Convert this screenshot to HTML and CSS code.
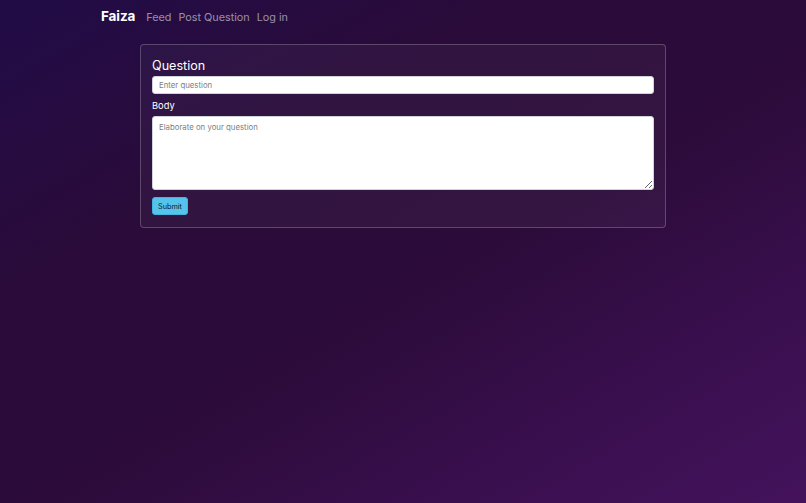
FILE: index.html
```html
<!DOCTYPE html>
<html lang="en">
<head>
<meta charset="utf-8">
<title>Post Question</title>
<link rel="stylesheet" href="styles.css">
</head>
<body>
<nav class="navbar">
  <a class="brand" href="#">Faiza</a>
  <ul class="nav-links">
    <li><a href="#">Feed</a></li>
    <li><a href="#">Post Question</a></li>
    <li><a href="#">Log in</a></li>
  </ul>
</nav>
<main class="main">
  <form class="card">
    <label class="title" for="q">Question</label>
    <input class="input" id="q" type="text" placeholder="Enter question">
    <label class="label" for="b">Body</label>
    <textarea class="textarea" id="b" placeholder="Elaborate on your question"></textarea>
    <div class="actions"><button class="btn" type="button">Submit</button></div>
  </form>
</main>
</body>
</html>
```
FILE: styles.css
```css
html, body {
  margin: 0;
  height: 100%;
}
body {
  font-family: Inter, "Liberation Sans", Arial, sans-serif;
  color: #fff;
  background: linear-gradient(150deg, #210c47 0%, #2a0b3a 30%, #2c0b3a 55%, #3a0f4f 80%, #43125b 100%);
  min-height: 503px;
}
.navbar {
  display: flex;
  align-items: baseline;
  height: 32px;
  box-sizing: border-box;
  padding: 5px 0 0 101px;
}
.brand {
  font-size: 13.5px;
  font-weight: 700;
  color: #fff;
  text-decoration: none;
  margin-right: 11px;
  letter-spacing: -0.1px;
}
.nav-links {
  display: flex;
  gap: 7px;
  list-style: none;
  margin: 0;
  padding: 0;
}
.nav-links a {
  font-size: 10.8px;
  color: rgba(255, 255, 255, 0.55);
  text-decoration: none;
}
.main {
  padding: 12px 0 0 140px;
}
.card {
  width: 526px;
  box-sizing: border-box;
  display: flex;
  flex-direction: column;
  padding: 12px 11px 12px 11px;
  border: 1px solid rgba(255, 255, 255, 0.22);
  border-radius: 4px;
  background: rgba(255, 255, 255, 0.04);
}
.title {
  font-size: 12.6px;
  line-height: 16px;
  margin: 1px 0 2px;
}
.input, .textarea {
  box-sizing: border-box;
  width: 100%;
  background: #fff;
  border: 1px solid #ced4da;
  border-radius: 3px;
  font-family: inherit;
  font-size: 7.8px;
  color: #212529;
  padding: 0 6px;
  margin: 0;
}
.input {
  height: 18px;
}
.input::placeholder, .textarea::placeholder {
  color: #7b7f85;
}
.label {
  font-size: 9.3px;
  line-height: 13px;
  margin: 5px 0 4px;
}
.textarea {
  height: 74px;
  padding-top: 5px;
  resize: vertical;
  display: block;
}
.actions {
  display: flex;
  margin-top: 7px;
}
.btn {
  height: 18px;
  padding: 0 5px;
  font-family: inherit;
  font-size: 7.3px;
  color: #0f1a2a;
  background: #54c4ec;
  border: 1px solid #46b3dc;
  border-radius: 3px;
}
```
